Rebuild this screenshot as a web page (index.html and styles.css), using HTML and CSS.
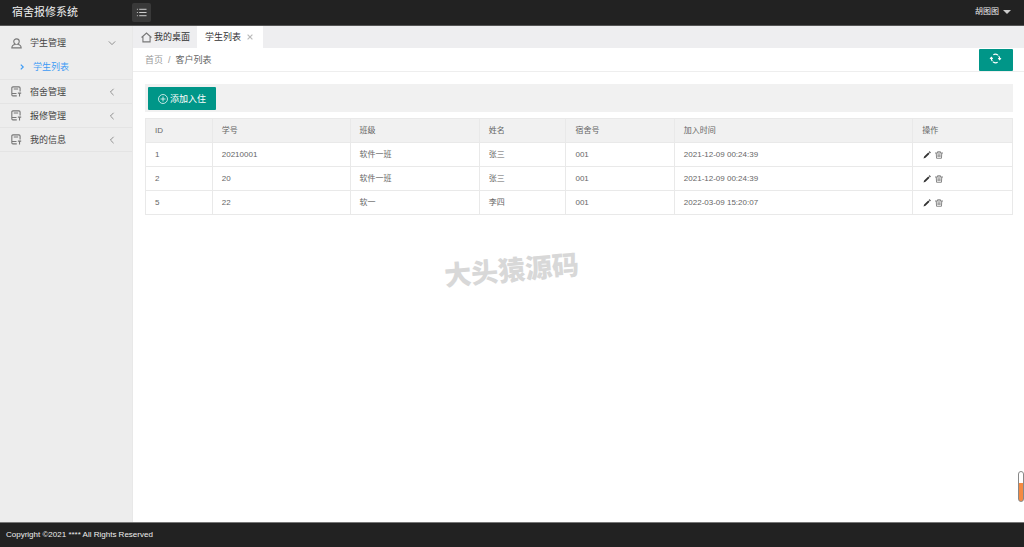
FILE: index.html
```html
<!DOCTYPE html>
<html lang="zh-CN">
<head>
<meta charset="utf-8">
<meta name="viewport" content="width=device-width, initial-scale=1">
<title>宿舍报修系统</title>
<link rel="stylesheet" href="styles.css">
</head>
<body>
<svg class="sprite" aria-hidden="true">
  <symbol id="book" viewBox="0 0 20 20"><path d="M10.500 18H3.500a2 2 0 0 1-2-2V3.500a2 2 0 0 1 2-2h11a2 2 0 0 1 2 2V10M5 5.500h8M1.500 13.500H10M12.500 13h6M15.500 13v6"/></symbol>
  <symbol id="left" viewBox="0 0 10 10"><path d="M7 1 3 5l4 4"/></symbol>
  <symbol id="pencil" viewBox="0 0 16 16"><path d="M1 15 2.300 11 10.500 3l2.700 2.700-8.200 8zM11.500 2l1-1a1 1 0 0 1 1.400 0l1.300 1.300a1 1 0 0 1 0 1.400l-1 1z"/></symbol>
  <symbol id="trash" viewBox="0 0 16 16"><path d="M0 4h16M5 4V1.500h6V4M2.500 4l.6 10.500h9.800L13.500 4M6 6.500v5.500M8 6.500v5.500M10 6.500v5.500"/></symbol>
</svg>
<header class="topbar">
  <h1 class="brand">宿舍报修系统</h1>
  <button class="toggle" type="button" aria-label="切换菜单">
    <svg class="icon" viewBox="0 0 12 12"><path d="M1 2.500h1M3.500 2.500H11.500M1 6h1M3.500 6H11.500M1 9.500h1M3.500 9.500H11.500"/></svg>
  </button>
  <button class="user" type="button">胡图图<span class="caret"></span></button>
</header>
<div class="shell">
  <nav class="side">
    <a class="item" href="#"><svg class="icon" viewBox="0 0 20 20"><path d="M10 1.500a5 5 0 0 1 5 5c0 2.200-1.200 4-3 4.800 3.800.8 6.500 3 6.500 6.700h-17c0-3.700 2.700-5.900 6.500-6.700-1.800-.8-3-2.600-3-4.800a5 5 0 0 1 5-5z"/></svg><span class="label">学生管理</span><svg class="arrow" viewBox="0 0 10 10"><path d="M1 3l4 4 4-4"/></svg></a>
    <a class="sub" href="#"><svg class="mark" viewBox="0 0 10 10"><path d="M3 1l4 4-4 4"/></svg>学生列表</a>
    <a class="item" href="#"><svg class="icon"><use href="#book"/></svg><span class="label">宿舍管理</span><svg class="arrow"><use href="#left"/></svg></a>
    <a class="item" href="#"><svg class="icon"><use href="#book"/></svg><span class="label">报修管理</span><svg class="arrow"><use href="#left"/></svg></a>
    <a class="item" href="#"><svg class="icon"><use href="#book"/></svg><span class="label">我的信息</span><svg class="arrow"><use href="#left"/></svg></a>
  </nav>
  <main class="main">
    <div class="tabs">
      <a class="tab" href="#"><svg class="icon" viewBox="0 0 20 20"><path d="M1 10 10 2l9 8M3.500 8v10h13V8"/></svg>我的桌面</a>
      <a class="tab current" href="#">学生列表<svg class="close" viewBox="0 0 10 10"><path d="M1 1l8 8M9 1l-8 8"/></svg></a>
    </div>
    <div class="crumbs">
      <a class="home" href="#">首页</a><span class="slash">/</span><span>客户列表</span>
      <button class="refresh" type="button" aria-label="刷新"><svg class="icon" viewBox="0 0 20 20"><path d="M6 3A8 8 0 0 1 17.500 11M14 17A8 8 0 0 1 2.500 9" stroke-dasharray="9 1.500"/><path d="M15 9.500l2.500 2.500L20 9.500M0 10.500 2.500 8 5 10.500"/></svg></button>
    </div>
    <section class="content">
      <div class="tools">
        <button class="add" type="button"><svg class="icon" viewBox="0 0 20 20"><circle cx="10" cy="10" r="9"/><path d="M10 5v10M5 10h10"/></svg>添加入住</button>
      </div>
      <table class="grid">
        <colgroup><col class="c-id"><col class="c-no"><col class="c-class"><col class="c-name"><col class="c-room"><col class="c-time"><col class="c-ops"></colgroup>
        <thead><tr><th>ID</th><th>学号</th><th>班级</th><th>姓名</th><th>宿舍号</th><th>加入时间</th><th>操作</th></tr></thead>
        <tbody>
          <tr><td>1</td><td>20210001</td><td>软件一班</td><td>张三</td><td>001</td><td>2021-12-09 00:24:39</td><td><div class="ops"><button type="button" aria-label="编辑"><svg class="edit"><use href="#pencil"/></svg></button><button type="button" aria-label="删除"><svg class="del"><use href="#trash"/></svg></button></div></td></tr>
          <tr><td>2</td><td>20</td><td>软件一班</td><td>张三</td><td>001</td><td>2021-12-09 00:24:39</td><td><div class="ops"><button type="button" aria-label="编辑"><svg class="edit"><use href="#pencil"/></svg></button><button type="button" aria-label="删除"><svg class="del"><use href="#trash"/></svg></button></div></td></tr>
          <tr><td>5</td><td>22</td><td>软一</td><td>李四</td><td>001</td><td>2022-03-09 15:20:07</td><td><div class="ops"><button type="button" aria-label="编辑"><svg class="edit"><use href="#pencil"/></svg></button><button type="button" aria-label="删除"><svg class="del"><use href="#trash"/></svg></button></div></td></tr>
        </tbody>
      </table>
    </section>
  </main>
</div>
<footer class="foot">Copyright ©2021 **** All Rights Reserved</footer>
<div class="watermark">大头猿源码</div>
<div class="gauge"></div>
</body>
</html>
```
FILE: styles.css
```css
* { box-sizing: border-box; }
body {
  margin: 0;
  min-height: 100vh;
  display: flex;
  flex-direction: column;
  background: #fff;
  color: #666;
  font: 8px/12px "Liberation Sans", "Noto Sans CJK SC", sans-serif;
}
a { color: inherit; text-decoration: none; }
button { border: 0; padding: 0; background: none; color: inherit; font: inherit; cursor: pointer; }
svg { display: block; flex: none; fill: none; stroke: currentColor; overflow: visible; }
.sprite { position: absolute; width: 0; height: 0; }

.topbar {
  display: flex;
  align-items: center;
  height: 26px;
  padding-bottom: 1px;
  background: #222;
  border-bottom: 1px solid #555;
  color: #eee;
}
.brand { width: 132px; margin: 0; padding-left: 12px; font-size: 11px; font-weight: 400; line-height: 16px; }
.toggle { display: grid; place-items: center; width: 19px; height: 19px; border-radius: 2px; background: #393939; color: #ddd; }
.toggle .icon { width: 11px; height: 11px; }
.user { display: flex; align-items: center; gap: 4px; margin-left: auto; padding-right: 13px; font-size: 8px; }
.caret { border: 4px solid transparent; border-top-color: #ccc; border-bottom: 0; }

.shell { flex: 1; display: flex; }
.side { width: 133px; flex: none; padding-top: 5px; background: #ededed; border-right: 1px solid #e8e8e8; color: #444; }
.item { display: flex; align-items: center; height: 24px; padding: 0 16px 0 11px; border-bottom: 1px solid #e4e4e4; }
.item:first-child { border: 0; }
.item .icon { width: 11px; height: 11px; color: #777; stroke-width: 2; }
.label { flex: 1; padding-left: 8px; font-size: 9px; }
.arrow { width: 8px; height: 8px; color: #777; }
.sub { display: flex; align-items: center; gap: 8px; height: 25px; padding-left: 19px; border-bottom: 1px solid #e4e4e4; color: #3d9bf5; font-size: 9px; }
.mark { width: 6px; height: 6px; stroke-width: 2; }

.main { flex: 1; min-width: 0; }
.tabs { display: flex; height: 22px; background: #eeeef0; }
.tab { display: flex; align-items: center; gap: 2px; padding: 0 7px 0 8px; color: #333; font-size: 9px; }
.tab .icon { width: 11px; height: 11px; color: #777; stroke-width: 2; }
.current { gap: 6px; padding-right: 10px; padding-left: 8px; background: #fff; }
.close { width: 6px; height: 6px; color: #bbb; stroke-width: 2; }
.crumbs { display: flex; align-items: center; height: 24px; padding: 0 11px 0 12px; border-bottom: 1px solid #eee; font-size: 9px; }
.home, .slash { color: #999; }
.slash { padding: 0 5px; }
.refresh { display: flex; justify-content: center; width: 34px; height: 22px; margin-left: auto; padding: 4px 2px 0 0; border-radius: 1px; background: #009688; color: #fff; }
.refresh .icon { width: 11px; height: 11px; stroke-width: 2; }

.content { padding: 12px 11px 12px 12px; }
.tools { padding: 3px 3px 2px; background: #f1f1f1; }
.add { display: flex; align-items: center; gap: 2px; height: 23px; padding: 0 10px; border-radius: 1px; background: #009688; color: #fff; font-size: 9px; }
.add .icon { width: 10px; height: 10px; stroke-width: 1.500; }
.grid { width: 100%; margin-top: 6px; table-layout: fixed; border-collapse: collapse; }
.grid th, .grid td { height: 24px; padding: 0 9px; border: 1px solid #e9e9e9; text-align: left; font-weight: 400; }
.grid th { background: #f1f1f1; }
.c-id { width: 7.700%; }
.c-no { width: 15.900%; }
.c-class { width: 14.900%; }
.c-name { width: 10%; }
.c-room { width: 12.500%; }
.c-time { width: 27.500%; }
.c-ops { width: 11.500%; }
.ops { display: flex; align-items: center; gap: 4px; padding-left: 1px; }
.edit { width: 8px; height: 8px; color: #333; fill: currentColor; stroke: none; }
.del { width: 8px; height: 8px; color: #888; stroke-width: 2; }

.foot { display: flex; align-items: center; height: 25px; padding-left: 6px; background: #222; border-top: 1px solid #777; color: #eee; }
.watermark {
  position: absolute;
  left: 50%;
  top: 249px;
  margin-left: -68px;
  color: #d8d8d8;
  font: 900 27px/40px "Noto Sans CJK SC", sans-serif;
  transform: rotate(-5deg);
  pointer-events: none;
}
.gauge {
  position: absolute;
  right: 0;
  bottom: 45px;
  width: 6px;
  height: 31px;
  border: 1px solid #888;
  border-radius: 3px;
  background: linear-gradient(#fff 38%, #f58a42 38%);
}
```
